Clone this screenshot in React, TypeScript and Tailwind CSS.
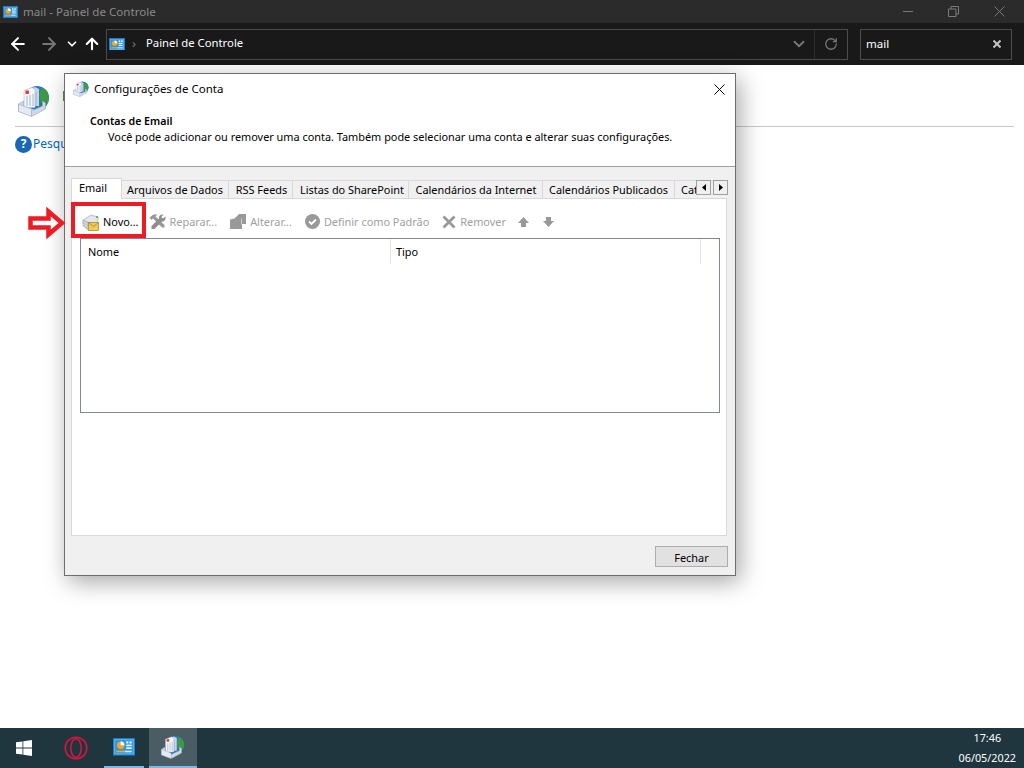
import { ArrowLeft, ArrowRight, ArrowUp, ChevronDown, RotateCw } from 'lucide-react'

const uiFont = "font-['Noto_Sans','Liberation_Sans',sans-serif]"

function ControlPanelIcon({ size = 16 }: { size?: number }) {
  return (
    <svg width={size} height={size * 0.8} viewBox="0 0 20 16" className="shrink-0">
      <rect x="0.5" y="0.5" width="19" height="15" fill="#57b8f2" stroke="#1e7cc4" />
      <rect x="2" y="2" width="16" height="12" fill="#2f95e0" />
      <circle cx="7" cy="6.5" r="3.4" fill="#f6a623" />
      <path d="M7 6.5V3.1A3.4 3.4 0 0 1 10.4 6.5Z" fill="#fff" />
      <rect x="12" y="3" width="2" height="2" fill="#e8f5fd" />
      <rect x="15" y="3" width="2" height="2" fill="#e8f5fd" />
      <rect x="12" y="6" width="5" height="1.5" fill="#e8f5fd" />
      <rect x="12" y="8.5" width="5" height="1.5" fill="#e8f5fd" />
      <rect x="3" y="11.5" width="8" height="1.5" fill="#f6a623" />
      <rect x="11" y="11.5" width="6" height="1.5" fill="#cfe9fa" />
    </svg>
  )
}

function MailIcon({ size = 32 }: { size?: number }) {
  return (
    <svg width={size} height={size} viewBox="0 0 32 32" className="shrink-0">
      <circle cx="19" cy="13" r="12" fill="#2b78c5" />
      <path d="M24 2.5a12 12 0 0 1 7 10.5l-1 5-7-1-2-8Z" fill="#3d9a46" />
      <path d="M21 24.8a12 12 0 0 0 8-5l-6-2Z" fill="#2f8a3c" />
      <path d="M8 5l9-3 4 2v17H8Z" fill="#c7d3e6" />
      <path d="M6 5.5l8-3 3 2v18H6Z" fill="#f3f6fb" stroke="#aebbd0" strokeWidth="0.6" />
      <rect x="7.5" y="5.5" width="3.4" height="3.4" fill="#e8352a" />
      <path d="M9 11v10M12 10v11M15 9v12M18 7v14" stroke="#a6b6cc" strokeWidth="1" />
      <path d="M0.5 19l5-3v7l8 3 11-5v-5l3 2v6l-13 7-14-5Z" fill="#cfd9e6" stroke="#94a4ba" strokeWidth="0.6" />
      <path d="M0.5 19l13 5v7.5l-13-5Z" fill="#e4eaf2" stroke="#94a4ba" strokeWidth="0.6" />
    </svg>
  )
}

function NewAccountIcon() {
  return (
    <svg width="18" height="18" viewBox="0 0 18 18" className="shrink-0">
      <path d="M1 7l8-5 7 2v4l-7 5-8-2Z" fill="#e3e7ec" stroke="#a7adb5" strokeWidth="0.7" />
      <path d="M1 7v6l5 4V9Z" fill="#c9ced5" stroke="#a7adb5" strokeWidth="0.6" />
      <rect x="6.5" y="9.5" width="10" height="8" fill="#f0c956" stroke="#a8831e" strokeWidth="0.7" />
      <path d="M6.5 9.5l5 4 5-4" fill="none" stroke="#a8831e" strokeWidth="0.8" />
      <rect x="14" y="3" width="2" height="2" fill="#5cc04c" />
    </svg>
  )
}

function RepairIcon() {
  return (
    <svg width="17" height="15" viewBox="0 0 17 15" className="shrink-0">
      <path d="M0.5 3.5l4-3h4l-2 2 9 8.5v2.5h-2.5l-9-9-1.5 1.5Z" fill="#999" />
      <path d="M16.5 2.5l-2.5 2-1.5-1.5 2-2.5c-2-.5-4.5.5-4.5 3v1l-7.5 7.5v3h3L13 7.5c2.5 0 4-2 3.5-5Z" fill="#8f8f8f" />
    </svg>
  )
}

function ChangeIcon() {
  return (
    <svg width="16" height="15" viewBox="0 0 16 15" className="shrink-0">
      <path d="M0 5.5l4.5-1L9 0h7v10h-4v5H0Z" fill="#999" />
      <path d="M11.5 4.5v6" stroke="#f4f4f4" strokeWidth="0.6" />
    </svg>
  )
}

function DefaultIcon() {
  return (
    <svg width="15" height="15" viewBox="0 0 15 15" className="shrink-0">
      <circle cx="7.5" cy="7.5" r="7.5" fill="#999" />
      <path d="M4 7.5l2.5 2.5 4.5-4.5" fill="none" stroke="#fff" strokeWidth="1.8" />
    </svg>
  )
}

function RemoveIcon() {
  return (
    <svg width="14" height="14" viewBox="0 0 14 14" className="shrink-0">
      <path d="M1.5 1.5l11 11M12.5 1.5l-11 11" stroke="#999" strokeWidth="2.8" />
    </svg>
  )
}

function SmallArrow({ down = false }: { down?: boolean }) {
  return (
    <svg width="11" height="10" viewBox="0 0 11 10" className="shrink-0">
      <path d={down ? 'M3 0h5v4h3L5.5 10 0 4h3Z' : 'M3 10h5V6h3L5.5 0 0 6h3Z'} fill="#999" />
    </svg>
  )
}

function CloseGlyph({ size, color }: { size: number; color: string }) {
  return (
    <svg width={size} height={size} viewBox={`0 0 ${size} ${size}`} className="shrink-0">
      <path d={`M0.5 0.5L${size - 0.5} ${size - 0.5}M${size - 0.5} 0.5L0.5 ${size - 0.5}`} stroke={color} strokeWidth="1" />
    </svg>
  )
}

function ToolButton({ icon, label, className }: { icon: React.ReactNode; label: string; className: string }) {
  return (
    <div className={`flex items-center text-[#a0a0a0] ${className}`}>
      {icon}
      <span>{label}</span>
    </div>
  )
}

function ScrollButton({ left = false, className = '' }: { left?: boolean; className?: string }) {
  return (
    <div className={`flex h-[15px] w-[15px] items-center justify-center border border-[#a0a0a0] bg-[#f0f0f0] ${className}`}>
      <svg width="4" height="7" viewBox="0 0 4 7">
        <path d={left ? 'M4 0v7L0 3.5Z' : 'M0 0v7l4-3.5Z'} fill="#000" />
      </svg>
    </div>
  )
}

const tabs = [
  { label: 'Arquivos de Dados', cls: 'w-[107px]' },
  { label: 'RSS Feeds', cls: 'w-[64px] pl-[2px]' },
  { label: 'Listas do SharePoint', cls: 'w-[116px] pl-[3px]' },
  { label: 'Calendários da Internet', cls: 'w-[134px] pl-[1px]' },
  { label: 'Calendários Publicados', cls: 'w-[132px]' },
]

function AccountDialog() {
  return (
    <div className={`absolute left-[64px] top-[73px] flex h-[503px] w-[672px] flex-col border border-[#6d6d6d] bg-[#f0f0f0] text-[10.9px] text-black shadow-[4px_6px_22px_rgba(0,0,0,0.35)] ${uiFont}`}>
      <div className="flex h-[93px] flex-col border-b border-[#a0a0a0] bg-white">
        <div className="flex h-[29px] items-center pl-[8px] pr-[10px] pt-[1px]">
          <MailIcon size={16} />
          <span className="ml-[5px] text-[11.5px]">Configurações de Conta</span>
          <div className="ml-auto"><CloseGlyph size={11} color="#000" /></div>
        </div>
        <div className="pl-[25px] pt-[10px] leading-[16px]">
          <div className="text-[10.6px] font-semibold">Contas de Email</div>
          <div className="pl-[18px]">Você pode adicionar ou remover uma conta. Também pode selecionar uma conta e alterar suas configurações.</div>
        </div>
      </div>

      <div className="flex flex-1 flex-col pl-[6px] pr-[8px] pt-[11px]">
        <div className="relative z-10 flex h-[20px] items-end">
          <div className="mb-[-1px] flex h-[21px] w-[51px] items-center border border-b-0 border-[#d9d9d9] bg-white pb-[2px] pl-[7px]">Email</div>
          {tabs.map(tab => (
            <div key={tab.label} className={`flex h-[18px] shrink-0 items-center justify-center border border-b-0 border-l-0 border-[#d9d9d9] bg-[#f0f0f0] pt-[2px] ${tab.cls}`}>
              {tab.label}
            </div>
          ))}
          <div className="h-[18px] min-w-0 flex-1 overflow-hidden border-t border-[#d9d9d9] pl-[6px] pt-[1px] leading-[16px]">Cat</div>
          <div className="absolute right-[-1px] top-[2px] flex">
            <ScrollButton left />
            <ScrollButton className="ml-[2px]" />
          </div>
        </div>

        <div className="flex h-[338px] flex-col border border-[#d9d9d9] bg-white pl-[8px] pr-[6px]">
          <div className="flex h-[39px] items-center pl-[2px] pt-[7px]">
            <div className="flex items-center gap-[3px]">
              <NewAccountIcon />
              <span>Novo...</span>
            </div>
            <ToolButton className="ml-[10px] gap-[4px]" icon={<RepairIcon />} label="Reparar..." />
            <ToolButton className="ml-[13px] gap-[4px]" icon={<ChangeIcon />} label="Alterar..." />
            <ToolButton className="ml-[13px] gap-[4px]" icon={<DefaultIcon />} label="Definir como Padrão" />
            <ToolButton className="ml-[13px] gap-[4px]" icon={<RemoveIcon />} label="Remover" />
            <div className="ml-[12px]"><SmallArrow /></div>
            <div className="ml-[14px]"><SmallArrow down /></div>
          </div>
          <div className="h-[175px] border border-[#828790] bg-white">
            <div className="flex h-[25px] items-center">
              <div className="flex h-full w-[310px] items-center border-r border-[#e5e5e5] pl-[7px] pt-[2px]">Nome</div>
              <div className="flex h-full w-[310px] items-center border-r border-[#e5e5e5] pl-[5px] pt-[2px]">Tipo</div>
            </div>
          </div>
        </div>

        <div className="flex justify-end pt-[10px]">
          <div className="mr-[-1px] flex h-[21px] w-[73px] items-center justify-center border border-[#adadad] bg-[#e1e1e1] pt-[3px]">Fechar</div>
        </div>
      </div>
    </div>
  )
}

export default function App() {
  return (
    <div className="relative flex h-[768px] w-[1024px] flex-col overflow-hidden bg-white">
      {/* title bar */}
      <div className={`flex h-[23px] items-center bg-[#2b2b2b] pl-[3px] text-[11.6px] text-[#8a8a8a] ${uiFont}`}>
        <ControlPanelIcon size={15} />
        <span className="ml-[5px] pt-[1px]">mail - Painel de Controle</span>
        <div className="ml-auto flex items-center">
          <div className="h-px w-[10px] bg-[#7a7a7a]" />
          <svg width="11" height="11" viewBox="0 0 11 11" className="ml-[35px]">
            <path d="M0.5 3h7.5v7.5H0.5ZM3 3V0.5h7.5V8H8" fill="none" stroke="#7a7a7a" />
          </svg>
          <div className="ml-[35px] mr-[19px]"><CloseGlyph size={11} color="#7a7a7a" /></div>
        </div>
      </div>

      {/* address bar */}
      <div className={`flex h-[42px] items-center bg-[#191919] text-[11.3px] text-white ${uiFont}`}>
        <ArrowLeft className="ml-[8px] shrink-0" size={20} strokeWidth={2.4} />
        <ArrowRight className="ml-[11px] shrink-0 text-[#777]" size={20} strokeWidth={2.4} />
        <ChevronDown className="ml-[6px] shrink-0" size={14} strokeWidth={3} />
        <ArrowUp className="ml-[4px] shrink-0" size={18} strokeWidth={2.8} />
        <div className="ml-[5px] flex h-[31px] w-[742px] shrink-0 items-center border border-[#4c4c4c] pl-[2px]">
          <ControlPanelIcon />
          <span className="ml-[7px] text-[13px] text-[#777]">›</span>
          <span className="ml-[10px] pb-[1px]">Painel de Controle</span>
          <ChevronDown className="ml-auto mr-[6px] text-[#777]" size={18} strokeWidth={2.5} />
          <div className="flex h-full w-[33px] items-center justify-center border-l border-[#2e2e2e]">
            <RotateCw className="text-[#777]" size={14} strokeWidth={2.2} />
          </div>
        </div>
        <div className="ml-[12px] flex h-[31px] w-[152px] shrink-0 items-center border border-[#4c4c4c] pl-[5px] pr-[10px] text-[11.5px]">
          <span className="pb-[1px]">mail</span>
          <svg width="8" height="8" viewBox="0 0 8 8" className="ml-auto">
            <path d="M0.5 0.5l7 7M7.5 0.5l-7 7" stroke="#c4c4c4" strokeWidth="2" />
          </svg>
        </div>
      </div>

      {/* control panel page behind the dialog */}
      <div className={`flex-1 bg-white pl-[15px] pr-[10px] text-[12px] ${uiFont}`}>
        <div className="flex h-[62px] items-start border-b border-[#c8c8c8] pl-[3px] pt-[20px]">
          <MailIcon />
          <div className="ml-[13px] mt-[6px] h-[10px] w-[2px] bg-[#5f8a3a]" />
        </div>
        <div className="flex items-center gap-[1px] pt-[8px] text-[#0066cc]">
          <span className="flex h-[17px] w-[17px] items-center justify-center rounded-full bg-[#1a66b8] text-[12px] font-bold text-white">?</span>
          <span>Pesquisar</span>
        </div>
      </div>

      {/* taskbar */}
      <div className={`flex h-[40px] items-center bg-[#20363f] text-[10.8px] text-white ${uiFont}`}>
        <div className="flex h-full w-[48px] items-center justify-center">
          <svg width="16" height="16" viewBox="0 0 16 16">
            <path d="M0 2.3l6.5-.9v6.2H0ZM7.3 1.3L16 0v7.6H7.3ZM0 8.4h6.5v6.2L0 13.7ZM7.3 8.4H16V16l-8.7-1.3Z" fill="#fff" />
          </svg>
        </div>
        <div className="flex h-full w-[56px] items-center justify-center">
          <svg width="24" height="24" viewBox="0 0 24 24">
            <circle cx="12" cy="12" r="10.8" fill="none" stroke="#d3163f" strokeWidth="1.6" />
            <ellipse cx="12" cy="12" rx="5.2" ry="9.4" fill="none" stroke="#d3163f" strokeWidth="1.6" />
          </svg>
        </div>
        <div className="flex h-full w-[40px] items-center justify-center border-b-2 border-[#76b9ed]">
          <ControlPanelIcon size={22} />
        </div>
        <div className="ml-[5px] flex h-full w-[48px] items-center justify-center border-b-2 border-[#76b9ed] bg-[#4a5d64]">
          <MailIcon size={24} />
        </div>
        <div className="ml-auto pr-[8px] text-center leading-[20px]">
          <div>17:46</div>
          <div>06/05/2022</div>
        </div>
      </div>

      <AccountDialog />

      {/* red highlight over the Novo button */}
      <div className="absolute left-[71px] top-[202px] h-[36px] w-[75px] border-[4px] border-[#ed1c24]" />
      <svg width="40" height="32" viewBox="0 0 40 32" className="absolute left-[27px] top-[207px]">
        <path d="M3.5 11.5h18V4.5L35 16 21.5 27.5v-7h-18Z" fill="#fff" stroke="#ed1c24" strokeWidth="4.5" />
      </svg>
    </div>
  )
}
